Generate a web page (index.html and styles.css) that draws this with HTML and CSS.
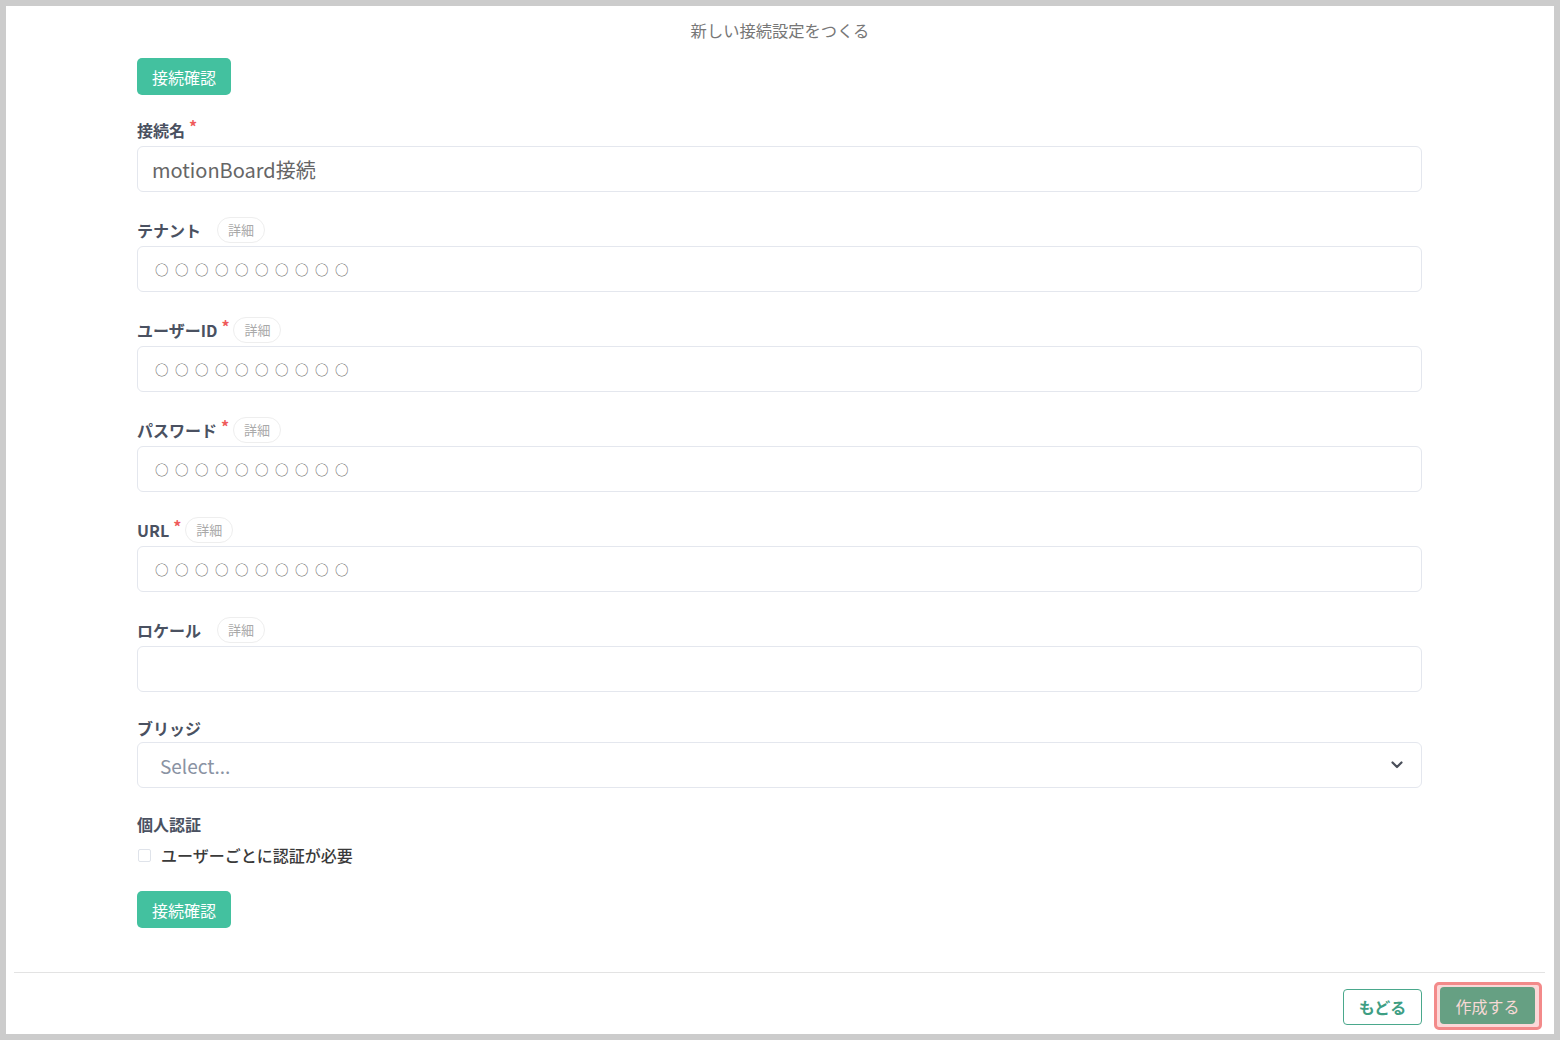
FILE: index.html
```html
<!DOCTYPE html>
<html lang="ja">
<head>
    <meta charset="UTF-8">
    <meta name="viewport" content="width=device-width, initial-scale=1.0">
    <title>新しい接続設定をつくる</title>
    <link rel="stylesheet" href="styles.css">
</head>
<body>
    <div class="panel">
        <h1 class="title">新しい接続設定をつくる</h1>

        <div class="form">
            <button class="btn-check">接続確認</button>

            <div class="field first">
                <div class="label-row">
                    <span class="label">接続名</span><span class="req">*</span>
                </div>
                <div class="input value">motionBoard接続</div>
            </div>

            <div class="field">
                <div class="label-row">
                    <span class="label">テナント</span><span class="req blank"></span>
                    <span class="badge">詳細</span>
                </div>
                <div class="input circles">○○○○○○○○○○</div>
            </div>

            <div class="field">
                <div class="label-row">
                    <span class="label">ユーザーID</span><span class="req">*</span>
                    <span class="badge">詳細</span>
                </div>
                <div class="input circles">○○○○○○○○○○</div>
            </div>

            <div class="field">
                <div class="label-row">
                    <span class="label">パスワード</span><span class="req">*</span>
                    <span class="badge">詳細</span>
                </div>
                <div class="input circles">○○○○○○○○○○</div>
            </div>

            <div class="field">
                <div class="label-row">
                    <span class="label">URL</span><span class="req">*</span>
                    <span class="badge">詳細</span>
                </div>
                <div class="input circles">○○○○○○○○○○</div>
            </div>

            <div class="field">
                <div class="label-row">
                    <span class="label">ロケール</span><span class="req blank"></span>
                    <span class="badge">詳細</span>
                </div>
                <div class="input"></div>
            </div>

            <div class="field">
                <div class="label-row short">
                    <span class="label">ブリッジ</span>
                </div>
                <div class="input select">
                    <span class="placeholder">Select...</span>
                    <svg class="chevron" width="12" height="8" viewBox="0 0 12 8">
                        <path d="M1.5 1.5l4.5 4.5 4.5-4.5" fill="none" stroke="#4a4f5a" stroke-width="2.2" stroke-linecap="round" stroke-linejoin="round"/>
                    </svg>
                </div>
            </div>

            <div class="field">
                <div class="label-row short">
                    <span class="label">個人認証</span>
                </div>
                <label class="check-row">
                    <span class="checkbox"></span>
                    <span>ユーザーごとに認証が必要</span>
                </label>
            </div>

            <button class="btn-check bottom">接続確認</button>
        </div>

        <div class="footer">
            <button class="btn-back">もどる</button>
            <div class="highlight">
                <button class="btn-create">作成する</button>
            </div>
        </div>
    </div>
</body>
</html>
```

FILE: styles.css
```css
* {
    box-sizing: border-box;
}
body {
    margin: 0;
    padding: 6px;
    background-color: #cccccc;
    font-family: "Noto Sans CJK JP", "Noto Sans", sans-serif;
    height: 1040px;
}
.panel {
    background-color: white;
    height: 1028px;
    display: flex;
    flex-direction: column;
    padding-top: 12px;
}
.title {
    margin: 0;
    font-size: 16.3px;
    line-height: 24px;
    font-weight: normal;
    color: #777;
    text-align: center;
}
.form {
    padding: 0 132px 0 131px;
    display: flex;
    flex-direction: column;
    align-items: stretch;
}
.btn-check {
    align-self: flex-start;
    margin-top: 16px;
    width: 94px;
    height: 37px;
    border: none;
    border-radius: 5px;
    background-color: #43c19f;
    color: white;
    font-family: inherit;
    font-size: 16px;
    padding: 0;
}
.btn-check.bottom {
    margin-top: 24px;
}
.field {
    margin-top: 25px;
}
.field.first {
    margin-top: 22px;
}
.label-row {
    display: flex;
    align-items: center;
    height: 26px;
}
.label-row.short {
    height: 22px;
}
.label {
    font-size: 16px;
    font-weight: bold;
    color: #4a5161;
}
.req {
    color: #ef5b5b;
    font-size: 16px;
    font-weight: bold;
    margin-left: 4px;
    margin-top: -8px;
    width: 9px;
}
.badge {
    margin-left: 3px;
    height: 26px;
    padding: 0 10px;
    border: 1px solid #eeeeee;
    border-radius: 13px;
    font-size: 13px;
    line-height: 24px;
    color: #a9a9a9;
}
.input {
    margin-top: 3px;
    height: 46px;
    border: 1px solid #e4e7ee;
    border-radius: 6px;
    padding: 0 14px;
    display: flex;
    align-items: center;
    font-size: 20px;
    color: #666;
}
.input.circles {
    padding-left: 17px;
    font-size: 13.5px;
    letter-spacing: 6.5px;
    color: #5f5f5f;
}
.input.select {
    justify-content: space-between;
    padding: 0 18px 0 22px;
}
.placeholder {
    color: #8a93a3;
    font-size: 19px;
}
.check-row {
    display: flex;
    align-items: center;
    margin-top: 8px;
    font-size: 16px;
    font-weight: 500;
    color: #3a3a3a;
}
.checkbox {
    width: 13px;
    height: 13px;
    border: 1px solid #dfe3ea;
    border-radius: 2px;
    margin: 0 10px 0 1px;
}
.footer {
    margin: auto 9px 0 8px;
    border-top: 1px solid #e3e3e3;
    padding: 9px 3px 4px 0;
    display: flex;
    justify-content: flex-end;
    align-items: center;
    gap: 12px;
}
.btn-back {
    width: 79px;
    height: 36px;
    background-color: white;
    border: 1.5px solid #4aa88c;
    border-radius: 4px;
    color: #3e9e83;
    font-family: inherit;
    font-size: 16px;
    font-weight: bold;
    padding: 0;
    margin-top: 1px;
}
.highlight {
    border: 3px solid #f38a8a;
    border-radius: 5px;
    background-color: #fcd8d8;
    padding: 2px 4px 3px 3px;
}
.btn-create {
    display: block;
    width: 95px;
    height: 37px;
    border: none;
    border-radius: 4px;
    background-color: #66a083;
    color: #f6d9d6;
    font-family: inherit;
    font-size: 16px;
    padding: 0;
}
```
